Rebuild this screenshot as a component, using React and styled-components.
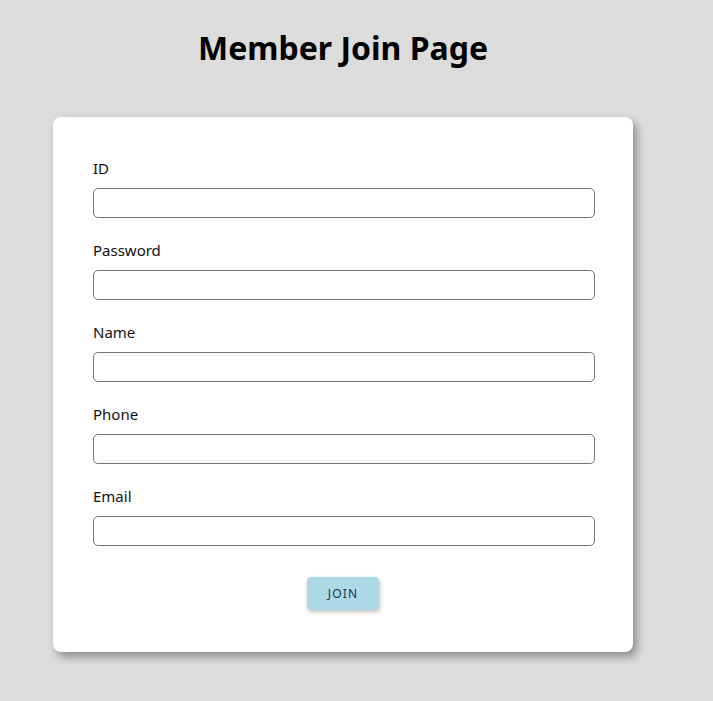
import React from "react";
import styled, { createGlobalStyle } from "styled-components";

const GlobalStyle = createGlobalStyle`
  html, body {
    margin: 0;
    padding: 0;
    background: #dcdcdc;
    font-family: "Noto Sans", "Noto Sans CJK KR", sans-serif;
  }
`;

const Page = styled.div`
  width: 686px;
  min-height: 701px;
  padding-top: 24px;
  box-sizing: border-box;
`;

const Title = styled.h1`
  margin: 0 0 45px;
  text-align: center;
  font-size: 32px;
  font-weight: 700;
  line-height: 48px;
  color: #000;
`;

const Card = styled.form`
  width: 580px;
  margin: 0 auto;
  background: #fff;
  border-radius: 8px;
  box-shadow: 4px 5px 8px rgba(0, 0, 0, 0.35);
  padding: 40px 40px 42px;
  box-sizing: border-box;
  display: flex;
  flex-direction: column;
`;

const Field = styled.div`
  display: flex;
  flex-direction: column;
  margin-bottom: 21px;
`;

const Label = styled.label`
  font-size: 15px;
  line-height: 22px;
  color: #111;
  margin-bottom: 9px;
`;

const Input = styled.input`
  width: 502px;
  height: 30px;
  box-sizing: border-box;
  border: 1px solid #767676;
  border-radius: 5px;
  background: #fff;
  outline: none;
`;

const JoinButton = styled.button`
  align-self: center;
  margin-top: 10px;
  width: 72px;
  height: 33px;
  border: none;
  border-radius: 4px;
  background: #add8e6;
  color: #1b3550;
  font-family: inherit;
  font-size: 12px;
  letter-spacing: 1.2px;
  text-transform: uppercase;
  box-shadow: 1px 2px 4px rgba(0, 0, 0, 0.25);
  cursor: pointer;
`;

const FIELDS = ["ID", "Password", "Name", "Phone", "Email"];

export default function App() {
  return (
    <>
      <GlobalStyle />
      <Page>
        <Title>Member Join Page</Title>
        <Card onSubmit={e => e.preventDefault()}>
          {FIELDS.map(name => (
            <Field key={name}>
              <Label>{name}</Label>
              <Input type={name === "Password" ? "password" : "text"} />
            </Field>
          ))}
          <JoinButton type="submit">join</JoinButton>
        </Card>
      </Page>
    </>
  );
}
